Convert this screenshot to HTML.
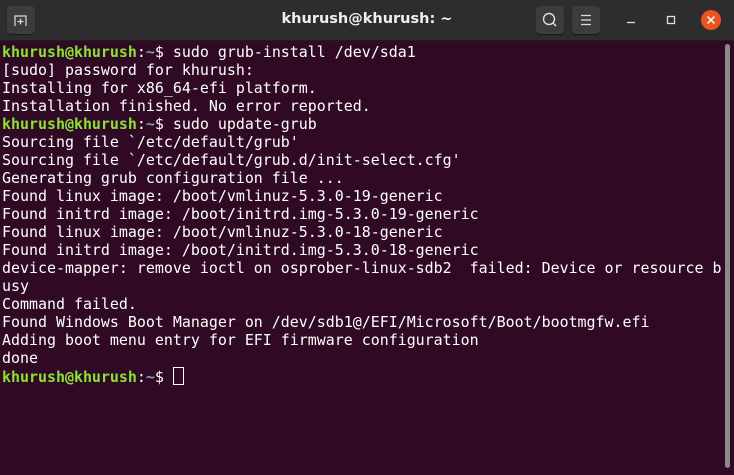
<!DOCTYPE html><html><head><style>
body{margin:0;width:734px;height:475px;background:#300a24;overflow:hidden;font-family:"DejaVu Sans Mono",monospace}
.tb{position:absolute;left:0;top:0;width:734px;height:40px;background:#2d2d2d;border-bottom:1px solid #1e1e1e}
.title{position:absolute;left:0;right:0;top:11px;text-align:center;color:#f0f0f0;font:bold 14.5px "DejaVu Sans",sans-serif}
.btn{position:absolute;top:6px;width:28px;height:28px;background:#3c3c3c;border-radius:4px;box-shadow:0 1px 1px #1a1a1a}
pre{position:absolute;left:2px;top:43px;margin:0;font-size:14.95px;line-height:17.98px;color:#fff;font-family:"DejaVu Sans Mono",monospace}
.g{color:#8ae234;font-weight:bold}.b{color:#729fcf;font-weight:bold}
.cur{display:inline-block;width:9px;height:16px;border:1px solid #fff;vertical-align:-3px}
</style></head><body>
<div class="tb">
<div class="btn" style="left:7px"><svg width="28" height="28"><path d="M8 20V10h11v10" fill="none" stroke="#ddd" stroke-width="1.2"/><path d="M13.5 12.5v6M10.5 15.5h6" stroke="#ddd" stroke-width="1.3"/></svg></div>
<div class="title">khurush@khurush: ~</div>
<div class="btn" style="left:536px"><svg width="28" height="28"><circle cx="13" cy="13" r="5.5" fill="none" stroke="#ddd" stroke-width="1.4"/><path d="M17 17l3 3" stroke="#ddd" stroke-width="1.5"/></svg></div>
<div class="btn" style="left:572px"><svg width="28" height="28"><path d="M9 9.5h10M9 14h10M9 18.5h10" stroke="#ddd" stroke-width="1.3"/></svg></div>
<svg style="position:absolute;left:620px;top:10px" width="24" height="24"><path d="M7 12.5h8" stroke="#ddd" stroke-width="1.3"/></svg>
<svg style="position:absolute;left:660px;top:10px" width="24" height="24"><rect x="7.5" y="6.5" width="7" height="7" fill="none" stroke="#ddd" stroke-width="1.3"/></svg>
<svg style="position:absolute;left:700px;top:10px" width="24" height="24"><circle cx="11" cy="10" r="10" fill="#e95420"/><path d="M7.5 6.5l7 7M14.5 6.5l-7 7" stroke="#fff" stroke-width="1.5"/></svg>
</div>
<div style="position:absolute;left:725px;top:44px;width:5px;height:424px;background:#8a8a8a;border-radius:3px"></div>
<pre><span class="g">khurush@khurush</span>:<span class="b">~</span>$ sudo grub-install /dev/sda1
[sudo] password for khurush:
Installing for x86_64-efi platform.
Installation finished. No error reported.
<span class="g">khurush@khurush</span>:<span class="b">~</span>$ sudo update-grub
Sourcing file `/etc/default/grub'
Sourcing file `/etc/default/grub.d/init-select.cfg'
Generating grub configuration file ...
Found linux image: /boot/vmlinuz-5.3.0-19-generic
Found initrd image: /boot/initrd.img-5.3.0-19-generic
Found linux image: /boot/vmlinuz-5.3.0-18-generic
Found initrd image: /boot/initrd.img-5.3.0-18-generic
device-mapper: remove ioctl on osprober-linux-sdb2  failed: Device or resource b
usy
Command failed.
Found Windows Boot Manager on /dev/sdb1@/EFI/Microsoft/Boot/bootmgfw.efi
Adding boot menu entry for EFI firmware configuration
done
<span class="g">khurush@khurush</span>:<span class="b">~</span>$ <span class="cur"></span></pre>
</body></html>
